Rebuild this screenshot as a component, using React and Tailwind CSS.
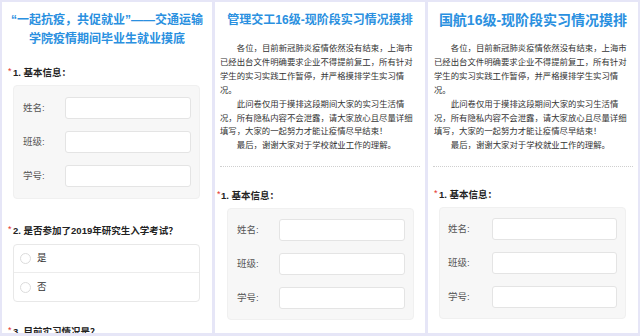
const font = "font-['Liberation_Sans','Noto_Sans_CJK_SC',sans-serif]";

const paragraph = [
  { text: "各位，目前新冠肺炎疫情依然没有结束，上海市", indent: true },
  { text: "已经出台文件明确要求企业不得提前复工，所有针对" },
  { text: "学生的实习实践工作暂停，并严格摸排学生实习情" },
  { text: "况。" },
  { text: "此问卷仅用于摸排这段期间大家的实习生活情", indent: true },
  { text: "况，所有隐私内容不会泄露，请大家放心且尽量详细" },
  { text: "填写，大家的一起努力才能让疫情尽早结束！" },
  { text: "最后，谢谢大家对于学校就业工作的理解。", indent: true },
];

const fields = ["姓名:", "班级:", "学号:"];

const QuestionTitle = ({ children, starClass, textClass }) => (
  <div className="flex items-start h-[14px] leading-[14px]">
    <span className={`text-[#e5322d] text-[9px] leading-[10px] ${starClass}`}>*</span>
    <span className={`text-[9.5px] font-bold text-[#222] ${textClass}`}>{children}</span>
  </div>
);

const InfoBox = ({ boxClass, labelClass, inputClass }) => (
  <div className={`bg-[#f7f7f7] border border-[#f0f0f0] rounded-[4px] flex flex-col gap-[12px] ${boxClass}`}>
    {fields.map((f) => (
      <div key={f} className="flex items-center">
        <span className={`text-[9.5px] text-[#555] ${labelClass}`}>{f}</span>
        <div className={`h-[22px] bg-white border border-[#e4e4e4] rounded-[3px] ${inputClass}`}></div>
      </div>
    ))}
  </div>
);

const Intro = () => (
  <div className="text-[8.4px] leading-[13.9px] text-[#333] whitespace-nowrap">
    {paragraph.map((l, i) => (
      <div key={i} className={l.indent ? "pl-[2em]" : ""}>
        {l.text}
      </div>
    ))}
  </div>
);

const App = () => {
  return (
    <div className={`w-[640px] h-[336px] bg-[#e6e6f7] p-[2px] pb-[3px] grid grid-cols-3 gap-[3px] overflow-hidden ${font}`}>
      {/* panel 1 */}
      <div className="bg-white overflow-hidden">
        <div className="pt-[9px] text-center text-[12px] leading-[19px] font-bold text-[#2a90e0]">
          “一起抗疫，共促就业”——交通运输
          <br />
          学院疫情期间毕业生就业摸底
        </div>
        <div className="mt-[17px] pl-[6px]">
          <QuestionTitle starClass="w-[5px]">1. 基本信息：</QuestionTitle>
        </div>
        <div className="mt-[5px] ml-[11px] mr-[12px]">
          <InfoBox boxClass="py-[11px] pl-[9px] pr-[8px]" labelClass="w-[42px]" inputClass="flex-1" />
        </div>
        <div className="mt-[25px] pl-[6px]">
          <QuestionTitle starClass="w-[5px]">2. 是否参加了2019年研究生入学考试？</QuestionTitle>
        </div>
        <div className="mt-[6px] ml-[11px] mr-[12px] border border-[#e8e8e8] rounded-[4px] bg-white">
          {["是", "否"].map((o, i) => (
            <div
              key={o}
              className={`h-[28px] flex items-center pl-[6px] ${i === 0 ? "border-b border-[#ececec]" : ""}`}
            >
              <span className="w-[11px] h-[11px] rounded-full border border-[#dcdcdc] bg-white"></span>
              <span className="ml-[6px] text-[9.5px] text-[#333]">{o}</span>
            </div>
          ))}
        </div>
        <div className="mt-[23px] pl-[6px]">
          <QuestionTitle starClass="w-[5px]">3. 目前实习情况是？</QuestionTitle>
        </div>
      </div>

      {/* panel 2 */}
      <div className="bg-white overflow-hidden">
        <div className="pt-[9px] text-center text-[12px] leading-[19px] font-bold text-[#2a90e0]">
          管理交工16级-现阶段实习情况摸排
        </div>
        <div className="mt-[12px] pl-[5px]">
          <Intro />
        </div>
        <div className="mt-[13px] mx-[5px] border-t border-dotted border-[#cfcfcf]"></div>
        <div className="mt-[22px] pl-[2px]">
          <QuestionTitle starClass="w-[4px]">1. 基本信息：</QuestionTitle>
        </div>
        <div className="mt-[5px] ml-[12px] mr-[11px]">
          <InfoBox boxClass="py-[10px] pl-[9px] pr-[8px]" labelClass="w-[42px]" inputClass="flex-1" />
        </div>
      </div>

      {/* panel 3 */}
      <div className="bg-white overflow-hidden">
        <div className="pt-[8px] text-center text-[14px] leading-[20px] font-bold text-[#2a90e0]">
          国航16级-现阶段实习情况摸排
        </div>
        <div className="mt-[12px] pl-[6px]">
          <Intro />
        </div>
        <div className="mt-[13px] mx-[5px] border-t border-dotted border-[#cfcfcf]"></div>
        <div className="mt-[21px] pl-[6px]">
          <QuestionTitle starClass="w-[5px]">1. 基本信息：</QuestionTitle>
        </div>
        <div className="mt-[5px] ml-[11px] mr-[12px]">
          <InfoBox boxClass="py-[10px] pl-[8px] pr-[8px]" labelClass="w-[44px]" inputClass="flex-1" />
        </div>
      </div>
    </div>
  );
};

export default App;
